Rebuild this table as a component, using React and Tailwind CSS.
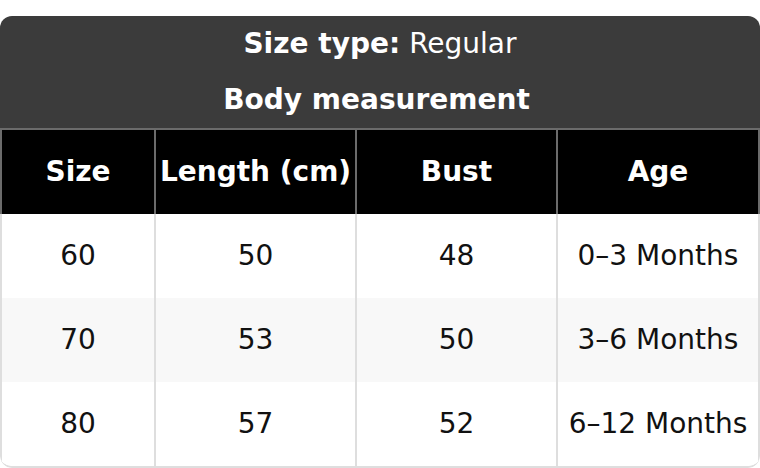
import React from "react";

const rows = [
  ["60", "50", "48", "0–3 Months"],
  ["70", "53", "50", "3–6 Months"],
  ["80", "57", "52", "6–12 Months"],
];
const heads = ["Size", "Length (cm)", "Bust", "Age"];

export default function App() {
  return (
    <div className="w-[760px] h-[468px] bg-white pt-4" style={{ fontFamily: '"DejaVu Sans", sans-serif' }}>
      <div className="rounded-[12px] overflow-hidden">
        <div className="bg-[#3b3b3b] text-white text-[28px]">
          <div className="h-[56px] flex items-center justify-center">
            <span className="font-bold">Size type:</span>
            <span className="ml-[9px]">Regular</span>
          </div>
          <div className="h-[56px] flex items-center justify-center font-bold pr-[7px]">Body measurement</div>
        </div>
        <div className="grid grid-cols-[154px_201px_201px_1fr] h-[86px] bg-black text-white font-bold text-[28px] border-t-2 border-[#6b6b6b]">
          {heads.map((h, i) => (
            <div
              key={h}
              className={
                "flex items-center justify-center border-l-2 border-[#6b6b6b] whitespace-nowrap" +
                (i === 3 ? " border-r-2" : "")
              }
            >
              {h}
            </div>
          ))}
        </div>
        <div className="border-b-2 border-[#dedede] rounded-b-[12px] overflow-hidden">
          {rows.map((r, ri) => (
            <div
              key={ri}
              className={
                "grid grid-cols-[154px_201px_201px_1fr] h-[84px] text-[28px] text-[#111]" +
                (ri === 1 ? " bg-[#f8f8f8]" : " bg-white")
              }
            >
              {r.map((c, i) => (
                <div
                  key={i}
                  className={
                    "flex items-center justify-center border-l-2 border-[#dedede] whitespace-nowrap" +
                    (i === 3 ? " border-r-2" : "")
                  }
                >
                  {c}
                </div>
              ))}
            </div>
          ))}
        </div>
      </div>
    </div>
  );
}
